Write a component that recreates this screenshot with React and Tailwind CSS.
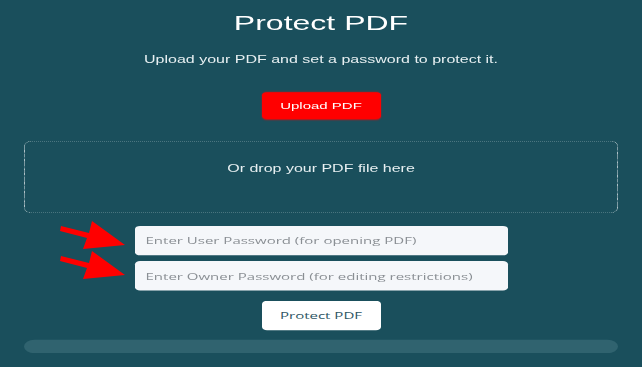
import React from "react";

export default function App() {
  return (
    <div className="relative h-[367px] w-full overflow-hidden bg-[#1a4f5c]">
      <div className="flex h-[573px] w-full origin-top scale-y-[0.64] flex-col items-center">
        <h1 className="mt-[17px] text-[32px] leading-[38px] text-white font-['Liberation_Sans',Arial,sans-serif]">
          Protect PDF
        </h1>
        <p className="mt-[27px] text-[16px] leading-[24px] text-[#e8f0f2] font-['Liberation_Sans',Arial,sans-serif]">
          Upload your PDF and set a password to protect it.
        </p>
        <button className="mt-[38px] flex h-[42px] w-[119px] items-center justify-center rounded-[5px] bg-[#ff0000] text-[15px] text-white shadow-[0_0_2px_rgba(255,0,0,0.8)] font-['Liberation_Sans',Arial,sans-serif]">
          Upload PDF
        </button>
        <div className="mt-[34px] flex h-[113px] w-[594px] flex-col items-center rounded-[8px] border-x-[1px] border-y-[1.6px] border-dotted border-[#dfe8ea] pt-[30px]">
          <span className="text-[16px] leading-[24px] text-[#e8f0f2] font-['Liberation_Sans',Arial,sans-serif]">
            Or drop your PDF file here
          </span>
        </div>
        <div className="mt-[20px] flex flex-col gap-[9px]">
          <input
            type="password"
            placeholder="Enter User Password (for opening PDF)"
            className="h-[46px] w-[373px] rounded-[5px] bg-[#f5f7fa] pl-[11px] text-[15px] text-[#333] outline-none placeholder:text-[#8a8f94] font-['Open_Sans',sans-serif]"
          />
          <input
            type="password"
            placeholder="Enter Owner Password (for editing restrictions)"
            className="h-[46px] w-[373px] rounded-[5px] bg-[#f5f7fa] pl-[11px] text-[15px] text-[#333] outline-none placeholder:text-[#8a8f94] font-['Open_Sans',sans-serif]"
          />
        </div>
        <button className="mt-[16px] flex h-[46px] w-[119px] items-center justify-center rounded-[5px] bg-white text-[15px] text-[#2d5563] font-['Open_Sans',sans-serif]">
          Protect PDF
        </button>
        <div className="mt-[15px] h-[21px] w-[594px] rounded-full bg-[#30636f]"></div>
      </div>
      <svg
        className="pointer-events-none absolute left-0 top-0"
        width="642"
        height="367"
        viewBox="0 0 642 367"
      >
        <path d="M61 226 L89 233 L92 221 L125 245 L83 249 L87 238 L60 231 Z" fill="#ff0000" />
        <path d="M61 256 L89 263 L92 251 L125 275 L83 279 L87 268 L60 261 Z" fill="#ff0000" />
      </svg>
    </div>
  );
}
